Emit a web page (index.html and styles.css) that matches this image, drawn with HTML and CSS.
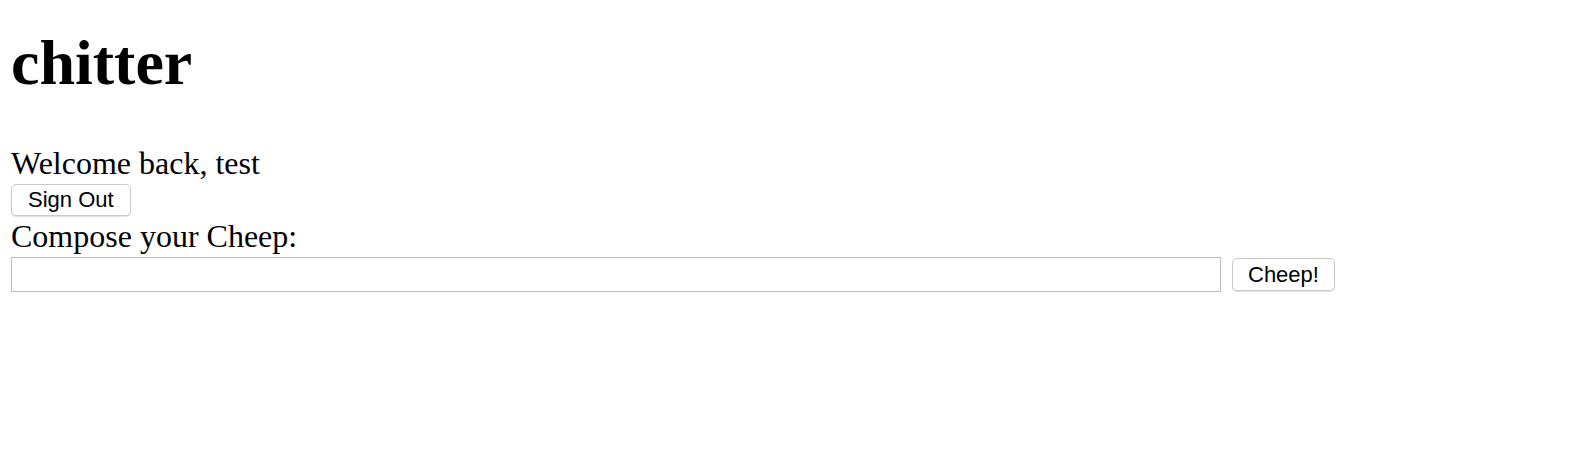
FILE: index.html
```html
<!DOCTYPE html>
<html>
<head>
<meta charset="utf-8">
<title>chitter</title>
<link rel="stylesheet" href="styles.css">
</head>
<body>
<h1 class="title">chitter</h1>
<div class="welcome">Welcome back, test</div>
<form class="signout">
  <button type="button" class="btn btn-signout">Sign Out</button>
</form>
<form class="compose">
  <label class="compose-label" for="cheep">Compose your Cheep:</label>
  <div class="compose-row">
    <input id="cheep" class="cheep-input" type="text">
    <button type="button" class="btn btn-cheep">Cheep!</button>
  </div>
</form>
</body>
</html>
```

FILE: styles.css
```css
html, body {
  background: #ffffff;
}
body {
  margin: 0;
  padding: 0 11px;
  font-family: "Liberation Serif", "Times New Roman", serif;
  font-size: 32px;
  line-height: 36px;
  color: #000;
}
.title {
  margin: 27px 0 47px;
  font-size: 64px;
  line-height: 71px;
  font-weight: bold;
}
.welcome {
  height: 36px;
}
.signout {
  margin: 3px 0 0;
  display: flex;
}
.btn {
  box-sizing: border-box;
  height: 32px;
  padding: 0 15px;
  font-family: "Liberation Sans", Arial, sans-serif;
  font-size: 22px;
  line-height: 30px;
  color: #000;
  background: #fff;
  border: 1px solid #c9c9c9;
  border-radius: 5px;
  box-shadow: 0 1px 1px rgba(0, 0, 0, 0.12);
  margin: 0;
}
.btn-signout {
  padding: 0 16px;
}
.compose {
  margin: 2px 0 0;
}
.compose-label {
  display: block;
  height: 36px;
}
.compose-row {
  margin-top: 3px;
  display: flex;
  align-items: center;
  gap: 11px;
}
.cheep-input {
  box-sizing: border-box;
  width: 1210px;
  height: 35px;
  margin: 0;
  padding: 2px 4px;
  border: 1px solid #bdbdbd;
  border-radius: 0;
  font-family: "Liberation Sans", Arial, sans-serif;
  font-size: 18px;
  background: #fff;
  outline: none;
}
.btn-cheep {
  height: 33px;
}
```
